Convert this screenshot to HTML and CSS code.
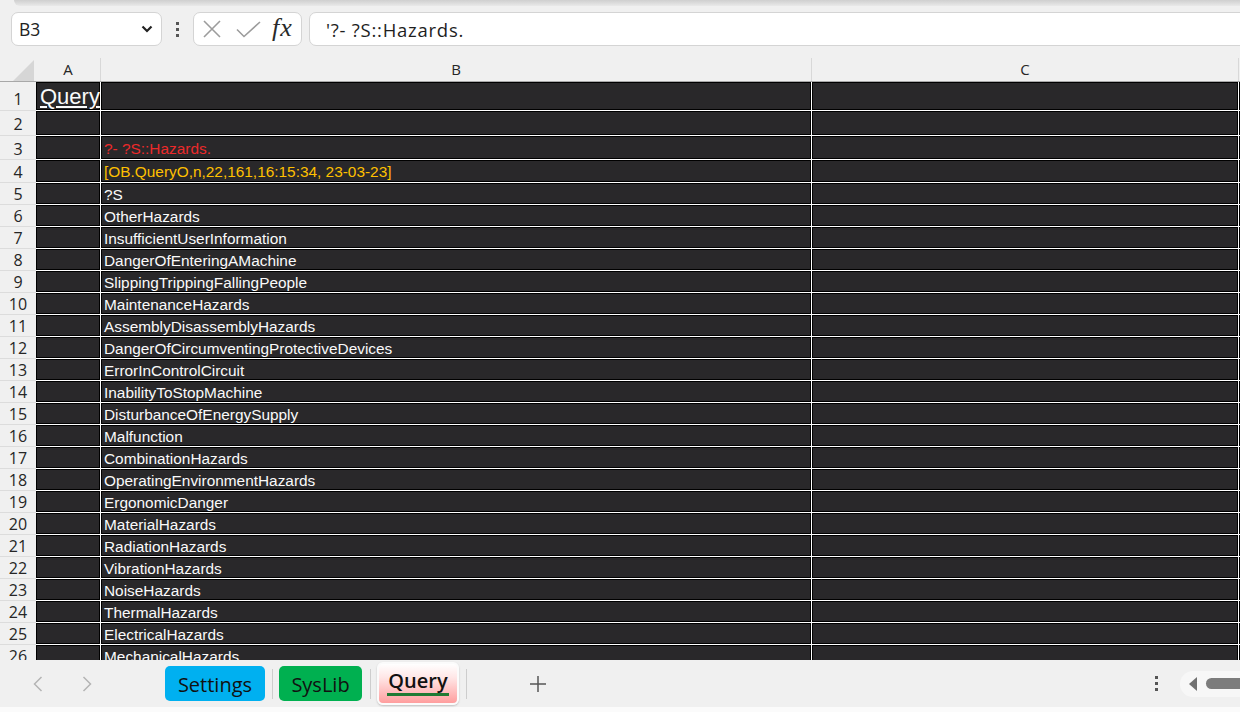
FILE: index.html
```html
<!DOCTYPE html>
<html>
<head>
<meta charset="utf-8">
<title>Query</title>
<link rel="stylesheet" href="styles.css">
</head>
<body>
<div class="topshade"></div>
<div class="fbar">
  <div class="namebox"><span class="ref">B3</span><svg class="chev" width="12" height="8" viewBox="0 0 12 8"><path d="M1.5 1.5 L6 6 L10.5 1.5" fill="none" stroke="#222" stroke-width="2.2"/></svg></div>
  <div class="vdots"><i></i><i></i><i></i></div>
  <div class="fxbox">
    <svg class="ix" width="18" height="18" viewBox="0 0 18 18"><path d="M1 1 L17 17 M17 1 L1 17" stroke="#9c9c9c" stroke-width="1.6"/></svg>
    <svg class="ic" width="25" height="17" viewBox="0 0 25 17"><path d="M1 8.5 L8 15.5 L24 1" fill="none" stroke="#9c9c9c" stroke-width="1.6"/></svg>
    <span class="fx">fx</span>
  </div>
  <div class="finput">'?- ?S::Hazards.</div>
</div>

<div class="sheet">
  <div class="colhead">
    <div class="corner"><svg width="22" height="21" viewBox="0 0 22 21"><path d="M22 0 L22 21 L1 21 Z" fill="#d6d6d6"/></svg></div>
    <div class="ch cha">A</div>
    <div class="ch chb">B</div>
    <div class="ch chc">C</div>
    <div class="ch chd"></div>
  </div>

  <div class="row r1"><div class="rh">1</div><div class="cells"><div class="c ca"><span class="q">Query</span></div><div class="c cb"></div><div class="c cc"></div><div class="c cd"></div></div></div>
  <div class="row r2"><div class="rh">2</div><div class="cells"><div class="c ca"></div><div class="c cb"></div><div class="c cc"></div><div class="c cd"></div></div></div>
  <div class="row r3"><div class="rh">3</div><div class="cells"><div class="c ca"></div><div class="c cb red">?- ?S::Hazards.</div><div class="c cc"></div><div class="c cd"></div></div></div>
  <div class="row r4"><div class="rh">4</div><div class="cells"><div class="c ca"></div><div class="c cb gold">[OB.QueryO,n,22,161,16:15:34, 23-03-23]</div><div class="c cc"></div><div class="c cd"></div></div></div>
  <div class="row"><div class="rh">5</div><div class="cells"><div class="c ca"></div><div class="c cb">?S</div><div class="c cc"></div><div class="c cd"></div></div></div>
  <div class="row"><div class="rh">6</div><div class="cells"><div class="c ca"></div><div class="c cb">OtherHazards</div><div class="c cc"></div><div class="c cd"></div></div></div>
  <div class="row"><div class="rh">7</div><div class="cells"><div class="c ca"></div><div class="c cb">InsufficientUserInformation</div><div class="c cc"></div><div class="c cd"></div></div></div>
  <div class="row"><div class="rh">8</div><div class="cells"><div class="c ca"></div><div class="c cb">DangerOfEnteringAMachine</div><div class="c cc"></div><div class="c cd"></div></div></div>
  <div class="row"><div class="rh">9</div><div class="cells"><div class="c ca"></div><div class="c cb">SlippingTrippingFallingPeople</div><div class="c cc"></div><div class="c cd"></div></div></div>
  <div class="row"><div class="rh">10</div><div class="cells"><div class="c ca"></div><div class="c cb">MaintenanceHazards</div><div class="c cc"></div><div class="c cd"></div></div></div>
  <div class="row"><div class="rh">11</div><div class="cells"><div class="c ca"></div><div class="c cb">AssemblyDisassemblyHazards</div><div class="c cc"></div><div class="c cd"></div></div></div>
  <div class="row"><div class="rh">12</div><div class="cells"><div class="c ca"></div><div class="c cb">DangerOfCircumventingProtectiveDevices</div><div class="c cc"></div><div class="c cd"></div></div></div>
  <div class="row"><div class="rh">13</div><div class="cells"><div class="c ca"></div><div class="c cb">ErrorInControlCircuit</div><div class="c cc"></div><div class="c cd"></div></div></div>
  <div class="row"><div class="rh">14</div><div class="cells"><div class="c ca"></div><div class="c cb">InabilityToStopMachine</div><div class="c cc"></div><div class="c cd"></div></div></div>
  <div class="row"><div class="rh">15</div><div class="cells"><div class="c ca"></div><div class="c cb">DisturbanceOfEnergySupply</div><div class="c cc"></div><div class="c cd"></div></div></div>
  <div class="row"><div class="rh">16</div><div class="cells"><div class="c ca"></div><div class="c cb">Malfunction</div><div class="c cc"></div><div class="c cd"></div></div></div>
  <div class="row"><div class="rh">17</div><div class="cells"><div class="c ca"></div><div class="c cb">CombinationHazards</div><div class="c cc"></div><div class="c cd"></div></div></div>
  <div class="row"><div class="rh">18</div><div class="cells"><div class="c ca"></div><div class="c cb">OperatingEnvironmentHazards</div><div class="c cc"></div><div class="c cd"></div></div></div>
  <div class="row"><div class="rh">19</div><div class="cells"><div class="c ca"></div><div class="c cb">ErgonomicDanger</div><div class="c cc"></div><div class="c cd"></div></div></div>
  <div class="row"><div class="rh">20</div><div class="cells"><div class="c ca"></div><div class="c cb">MaterialHazards</div><div class="c cc"></div><div class="c cd"></div></div></div>
  <div class="row"><div class="rh">21</div><div class="cells"><div class="c ca"></div><div class="c cb">RadiationHazards</div><div class="c cc"></div><div class="c cd"></div></div></div>
  <div class="row"><div class="rh">22</div><div class="cells"><div class="c ca"></div><div class="c cb">VibrationHazards</div><div class="c cc"></div><div class="c cd"></div></div></div>
  <div class="row"><div class="rh">23</div><div class="cells"><div class="c ca"></div><div class="c cb">NoiseHazards</div><div class="c cc"></div><div class="c cd"></div></div></div>
  <div class="row"><div class="rh">24</div><div class="cells"><div class="c ca"></div><div class="c cb">ThermalHazards</div><div class="c cc"></div><div class="c cd"></div></div></div>
  <div class="row"><div class="rh">25</div><div class="cells"><div class="c ca"></div><div class="c cb">ElectricalHazards</div><div class="c cc"></div><div class="c cd"></div></div></div>
  <div class="row"><div class="rh">26</div><div class="cells"><div class="c ca"></div><div class="c cb">MechanicalHazards</div><div class="c cc"></div><div class="c cd"></div></div></div>
</div>

<div class="tabbar">
  <svg class="nav navl" width="10" height="16" viewBox="0 0 10 16"><path d="M8.5 1 L1.5 8 L8.5 15" fill="none" stroke="#b4b4b4" stroke-width="1.5"/></svg>
  <svg class="nav navr" width="10" height="16" viewBox="0 0 10 16"><path d="M1.5 1 L8.5 8 L1.5 15" fill="none" stroke="#b4b4b4" stroke-width="1.5"/></svg>
  <div class="tab settings">Settings</div>
  <div class="sep"></div>
  <div class="tab syslib">SysLib</div>
  <div class="sep sep2"></div>
  <div class="tab query"><span class="qt">Query</span></div>
  <div class="sep sep3"></div>
  <svg class="plus" width="18" height="18" viewBox="0 0 18 18"><path d="M9 1 V17 M1 9 H17" stroke="#555" stroke-width="1.5"/></svg>
  <div class="rightgrp">
    <div class="more"><i></i><i></i><i></i></div>
    <div class="hscroll">
      <svg width="10" height="14" viewBox="0 0 10 14"><path d="M9 0 V14 L1 7 Z" fill="#707070"/></svg>
      <div class="thumb"></div>
    </div>
  </div>
</div>
<div class="footstrip"></div>
</body>
</html>
```
FILE: styles.css
```css
html, body {
  margin: 0;
  padding: 0;
}
body {
  width: 1240px;
  height: 712px;
  overflow: hidden;
  background: #f0f0f0;
  font-family: "Open Sans", "Noto Sans", sans-serif;
}

.topshade {
  height: 6px;
  margin-left: 14px;
  border-bottom-left-radius: 6px;
  background: linear-gradient(#cfcfcf, #e9e9e9);
}

.fbar {
  display: flex;
  align-items: stretch;
  height: 34px;
  margin-top: 6px;
  margin-bottom: 12px;
}
.namebox {
  margin-left: 11px;
  width: 151px;
  box-sizing: border-box;
  border: 1px solid #d4d4d4;
  border-radius: 7px;
  background: #fff;
  display: flex;
  align-items: center;
  padding-left: 7px;
  padding-right: 8px;
}
.ref {
  font-size: 17.5px;
  color: #222;
}
.chev {
  margin-left: auto;
}
.vdots {
  width: 31px;
  display: flex;
  flex-direction: column;
  align-items: center;
  justify-content: center;
  gap: 3px;
}
.vdots i, .more i {
  display: block;
  width: 3px;
  height: 3px;
  background: #555;
}
.fxbox {
  width: 109px;
  box-sizing: border-box;
  border: 1px solid #d4d4d4;
  border-radius: 7px;
  background: #fff;
  display: flex;
  align-items: center;
  padding-left: 9px;
}
.ic {
  margin-left: 15px;
}
.fx {
  margin-left: 11px;
  font-family: "Liberation Serif", serif;
  font-style: italic;
  font-size: 26px;
  letter-spacing: 1px;
  color: #2a2a2a;
  line-height: 1;
  margin-top: -2px;
}
.finput {
  margin-left: 7px;
  flex: 1;
  margin-right: -20px;
  box-sizing: border-box;
  border: 1px solid #d4d4d4;
  border-radius: 7px;
  background: #fff;
  display: flex;
  align-items: center;
  padding-left: 16px;
  font-size: 18.5px;
  letter-spacing: 0.75px;
  color: #1e1e1e;
}

.sheet {
  height: 602px;
  overflow: hidden;
}
.colhead {
  display: flex;
  height: 24px;
  box-sizing: border-box;
  border-bottom: 1px solid #a8a8a8;
}
.corner {
  width: 36px;
  flex: none;
  display: flex;
  align-items: flex-end;
  justify-content: flex-end;
  padding-right: 2px;
  box-sizing: border-box;
}
.ch {
  flex: none;
  box-sizing: border-box;
  border-right: 1px solid #d8d8d8;
  display: flex;
  align-items: center;
  justify-content: center;
  font-size: 15px;
  color: #262626;
  padding-bottom: 1px;
}
.cha { width: 65px; }
.chb { width: 711px; }
.chc { width: 427px; }
.chd { width: 200px; }

.row {
  display: flex;
  height: 22px;
}
.r1 { height: 29px; }
.r2 { height: 25px; }
.r3 { height: 24px; }
.r4 { height: 23px; }

.rh {
  width: 36px;
  flex: none;
  box-sizing: border-box;
  border-bottom: 1px solid #dcdcdc;
  display: flex;
  align-items: center;
  justify-content: center;
  font-size: 16px;
  color: #262626;
  padding-top: 1px;
}
.r1 .rh {
  padding-top: 5px;
}
.r3 .rh {
  padding-top: 3px;
}
.cells {
  display: flex;
  gap: 1px;
  background: #fff;
  padding-bottom: 1px;
  box-sizing: border-box;
  height: 100%;
}
.c {
  flex: none;
  box-sizing: border-box;
  border: 1px solid #000;
  background: #29282a;
  display: flex;
  align-items: center;
  padding-left: 2px;
  white-space: nowrap;
  color: #fafafa;
  font-family: "Liberation Sans", Arial, sans-serif;
  font-size: 15.4px;
  padding-top: 2px;
}
.ca { width: 64px; }
.cb { width: 710px; }
.cc { width: 426px; }
.cd { width: 200px; }

.q {
  font-size: 22px;
  text-decoration: underline;
  text-underline-offset: 2px;
  margin-left: 1px;
}
.red { color: #ec2a2a; }
.gold { color: #ffc000; }

.tabbar {
  height: 47px;
  display: flex;
  align-items: center;
  background: #f0f0f0;
}
.nav {
  flex: none;
}
.navl { margin-left: 33px; }
.navr { margin-left: 39px; }
.tab {
  flex: none;
  box-sizing: border-box;
  display: flex;
  align-items: center;
  justify-content: center;
  font-size: 20px;
  color: #111;
  border-radius: 5px;
  height: 35px;
  padding-top: 2px;
}
.settings {
  margin-left: 73px;
  width: 100px;
  background: #00b0f0;
}
.sep {
  flex: none;
  width: 1px;
  height: 30px;
  background: #cdcdcd;
  margin-left: 7px;
  margin-right: 6px;
}
.syslib {
  width: 83px;
  background: #00b050;
}
.sep2 {
  margin-left: 8px;
  margin-right: 6px;
}
.query {
  width: 82px;
  height: 43px;
  border: 2px solid #fbfbfb;
  border-radius: 6px;
  background: linear-gradient(#ffffff 0%, #ffe6e6 35%, #ff9e9e 100%);
  box-shadow: 0 1px 2px rgba(0, 0, 0, 0.2);
  font-weight: 600;
  padding-top: 0;
  padding-bottom: 3px;
}
.qt {
  border-bottom: 3px solid #1f7a33;
  line-height: 25px;
  padding: 0 1px;
}
.sep3 {
  margin-left: 7px;
  margin-right: 0;
}
.plus {
  flex: none;
  margin-left: 62px;
}
.rightgrp {
  margin-left: auto;
  display: flex;
  align-items: center;
}
.more {
  width: 12px;
  display: flex;
  flex-direction: column;
  align-items: center;
  gap: 3px;
}
.hscroll {
  margin-left: 18px;
  width: 60px;
  height: 26px;
  border-radius: 13px 0 0 13px;
  background: #f7f7f7;
  display: flex;
  align-items: center;
  padding-left: 8px;
  box-sizing: border-box;
}
.thumb {
  margin-left: 8px;
  flex: 1;
  height: 11px;
  border-radius: 6px 0 0 6px;
  background: #7c7c7c;
}
.footstrip {
  height: 5px;
  background: #fbfbfb;
}
```
